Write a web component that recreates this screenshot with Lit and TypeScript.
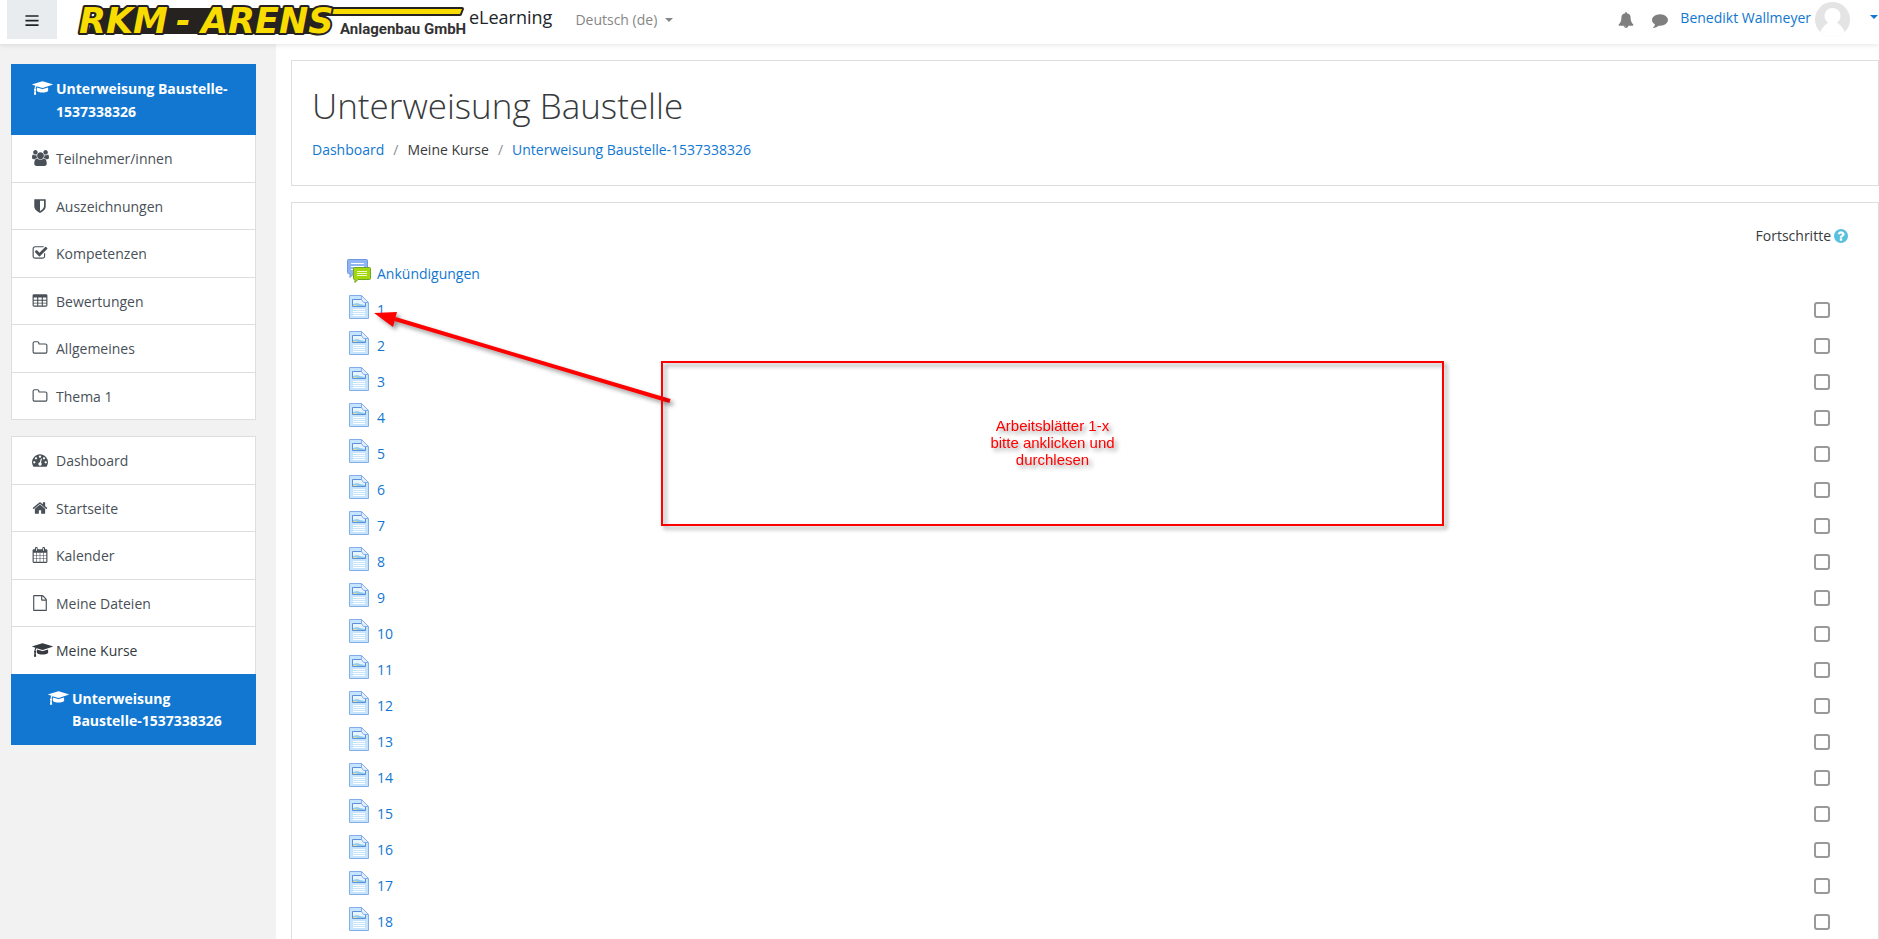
import { LitElement, html, css, svg } from "lit";
import { customElement, property } from "lit/decorators.js";

type Glyph = { box: string; d: string };

const GLYPHS: Record<string, Glyph> = {
  bars: { box: "0 0 1792 1792", d: "M192 352h1408q32 0 32 32v128q0 32-32 32h-1408q-32 0-32-32v-128q0-32 32-32zm0 512h1408q32 0 32 32v128q0 32-32 32h-1408q-32 0-32-32v-128q0-32 32-32zm0 512h1408q32 0 32 32v128q0 32-32 32h-1408q-32 0-32-32v-128q0-32 32-32z" },
  cap: { box: "0 -128 2304 1792", d: "M1774 708l18 316q4 69-82 128t-235 93.5-323 34.5-323-34.5-235-93.5-82-128l18-316 574 181q22 7 48 7t48-7zm530-324q0 23-22 31l-1120 352q-4 1-10 1t-10-1l-652-206q-43 34-71 111.5t-34 178.5q63 36 63 109 0 69-58 107l58 433q2 14-8 25-9 11-24 11h-192q-15 0-24-11-10-11-8-25l58-433q-58-38-58-107 0-73 65-111 11-207 98-330l-333-104q-22-8-22-31t22-31l1120-352q4-1 10-1t10 1l1120 352q22 8 22 31z" },
  users: { box: "64 0 1920 1792", d: "M657 896q-162 5-265 128h-134q-82 0-138-40.5t-56-118.5q0-353 124-353 6 0 43.5 21t97.5 42.5 119 21.5q67 0 133-23-5 37-5 66 0 139 81 256zm1071 637q0 120-73 189.5t-194 69.5h-874q-121 0-194-69.5t-73-189.5q0-53 3.5-103.5t14-109 26.5-108.5 43-97.5 62-81 85.5-53.5 111.5-20q10 0 43 21.5t73 48 107 48 135 21.5 135-21.5 107-48 73-48 43-21.5q61 0 111.5 20t85.5 53.5 62 81 43 97.5 26.5 108.5 14 109 3.5 103.5zm-1024-1277q0 106-75 181t-181 75-181-75-75-181 75-181 181-75 181 75 75 181zm704 384q0 159-112.5 271.5t-271.5 112.5-271.5-112.5-112.5-271.5 112.5-271.5 271.5-112.5 271.5 112.5 112.5 271.5zm576 225q0 78-56 118.5t-138 40.5h-134q-103-123-265-128 81-117 81-256 0-29-5-66 66 23 133 23 59 0 119-21.5t97.5-42.5 43.5-21q124 0 124 353zm-128-609q0 106-75 181t-181 75-181-75-75-181 75-181 181-75 181 75 75 181z" },
  shield: { box: "0 0 1792 1792", d: "M1344 960v-640h-448v1137q119-63 213-137 235-184 235-360zm192-768v768q0 86-33.5 170.5t-83 150-118 127.5-126.5 103-121 77.5-89.5 49.5-42.5 20q-12 6-26 6t-26-6q-16-7-42.5-20t-89.5-49.5-121-77.5-126.5-103-118-127.5-83-150-33.5-170.5v-768q0-26 19-45t45-19h1152q26 0 45 19t19 45z" },
  check: { box: "0 0 1792 1792", d: "M1472 930v318q0 119-84.5 203.5t-203.5 84.5h-832q-119 0-203.5-84.5t-84.5-203.5v-832q0-119 84.5-203.5t203.5-84.5h832q63 0 117 25 15 7 18 23 3 17-9 29l-49 49q-10 10-23 10-3 0-9-2-23-6-45-6h-832q-66 0-113 47t-47 113v832q0 66 47 113t113 47h832q66 0 113-47t47-113v-254q0-13 9-22l64-64q10-10 23-10 6 0 12 3 20 8 20 29zm231-489l-814 814q-24 24-57 24t-57-24l-430-430q-24-24-24-57t24-57l110-110q24-24 57-24t57 24l263 263 647-647q24-24 57-24t57 24l110 110q24 24 24 57t-24 57z" },
  table: { box: "0 0 1792 1792", d: "M224 128h1344q160 0 160 160v1088q0 160-160 160h-1344q-160 0-160-160v-1088q0-160 160-160zM192 512v256h384v-256zm512 0v256h384v-256zm512 0v256h384v-256zM192 864v224h384v-224zm512 0v224h384v-224zm512 0v224h384v-224zM192 1184v224h384v-224zm512 0v224h384v-224zm512 0v224h384v-224z" },
  folder: { box: "0 0 1792 1792", d: "M1600 1312v-704q0-40-28-68t-68-28h-704q-40 0-68-28t-28-68v-64q0-40-28-68t-68-28h-320q-40 0-68 28t-28 68v960q0 40 28 68t68 28h1216q40 0 68-28t28-68zm128-704v704q0 92-66 158t-158 66h-1216q-92 0-158-66t-66-158v-960q0-92 66-158t158-66h320q92 0 158 66t66 158v32h672q92 0 158 66t66 158z" },
  gauge: { box: "0 0 1792 1792", d: "M384 1152q0-53-37.5-90.5t-90.5-37.5-90.5 37.5-37.5 90.5 37.5 90.5 90.5 37.5 90.5-37.5 37.5-90.5zm192-448q0-53-37.5-90.5t-90.5-37.5-90.5 37.5-37.5 90.5 37.5 90.5 90.5 37.5 90.5-37.5 37.5-90.5zm428 481l101-382q6-26-7.5-48.5t-38.5-29.5-48 6.5-30 39.5l-101 382q-60 5-107 43.5t-63 98.5q-20 77 20 146t117 89 146-20 89-117q16-60-6-117t-72-91zm660-33q0-53-37.5-90.5t-90.5-37.5-90.5 37.5-37.5 90.5 37.5 90.5 90.5 37.5 90.5-37.5 37.5-90.5zm-640-640q0-53-37.5-90.5t-90.5-37.5-90.5 37.5-37.5 90.5 37.5 90.5 90.5 37.5 90.5-37.5 37.5-90.5zm448 192q0-53-37.5-90.5t-90.5-37.5-90.5 37.5-37.5 90.5 37.5 90.5 90.5 37.5 90.5-37.5 37.5-90.5zm320 448q0 261-141 483-19 29-54 29h-1402q-35 0-54-29-141-221-141-483 0-182 71-348t191-286 286-191 348-71 348 71 286 191 191 286 71 348z" },
  home: { box: "0 0 1792 1792", d: "M1472 992v480q0 26-19 45t-45 19h-384v-384h-256v384h-384q-26 0-45-19t-19-45v-480q0-1 .5-3t.5-3l575-474 575 474q1 2 1 6zm223-69l-62 74q-8 9-21 11h-3q-13 0-21-7l-692-577-692 577q-12 8-24 7-13-2-21-11l-62-74q-8-10-7-23.5t11-21.5l719-599q32-26 76-26t76 26l244 204v-195q0-14 9-23t23-9h192q14 0 23 9t9 23v408l219 182q10 8 11 21.5t-7 23.5z" },
  calendar: { box: "0 0 1792 1792", d: "M192 256h128v-96q0-160 144-160h32q144 0 144 160v96h512v-96q0-160 144-160h32q144 0 144 160v96h128q128 0 128 128v1280q0 128-128 128h-1408q-128 0-128-128v-1280q0-128 128-128zM448 128v288h96v-288zm800 0v288h96v-288zM192 640v288h288v-288zm352 0v288h320v-288zm384 0v288h320v-288zm384 0v288h288v-288zM192 992v288h288v-288zm352 0v288h320v-288zm384 0v288h320v-288zm384 0v288h288v-288zM192 1344v320h288v-320zm352 0v320h320v-320zm384 0v320h320v-320zm384 0v320h288v-320z" },
  file: { box: "0 0 1792 1792", d: "M1596 380q28 28 48 76t20 88v1152q0 40-28 68t-68 28h-1344q-40 0-68-28t-28-68v-1600q0-40 28-68t68-28h896q40 0 88 20t76 48zm-444-244v376h376q-10-29-22-41l-313-313q-12-12-41-22zm384 1528v-1024h-416q-40 0-68-28t-28-68v-416h-768v1536h1280z" },
  bell: { box: "0 0 1792 1792", d: "M912 1696q0-16-16-16-59 0-101.5-42.5t-42.5-101.5q0-16-16-16t-16 16q0 73 51.5 124.5t124.5 51.5q16 0 16-16zm816-288q0 52-38 90t-90 38h-448q0 106-75 181t-181 75-181-75-75-181h-448q-52 0-90-38t-38-90q50-42 91-88t85-119.5 74.5-158.5 50-206 19.5-260q0-152 117-282.5t307-158.5q-8-19-8-39 0-40 28-68t68-28 68 28 28 68q0 20-8 39 190 28 307 158.5t117 282.5q0 139 19.5 260t50 206 74.5 158.5 85 119.5 91 88z" },
  comment: { box: "0 0 1792 1792", d: "M1792 896q0 174-120 321.5t-326 233-450 85.5q-70 0-145-8-198 175-460 242-49 14-114 22-17 2-30.5-9t-17.5-29v-1q-3-4-.5-12t2-10 4.5-9.5l6-9 7-8.5 8-9q7-8 31-34.5t34.5-38 31-39.5 32.5-51 27-59 26-76q-157-89-247.5-220t-90.5-281q0-130 71-248.5t191-204.5 286-136.5 348-50.5q244 0 450 85.5t326 233 120 321.5z" },
  help: { box: "128 128 1536 1536", d: "M1024 1376v-192q0-14-9-23t-23-9h-192q-14 0-23 9t-9 23v192q0 14 9 23t23 9h192q14 0 23-9t9-23zm256-672q0-88-55.5-163t-138.5-116-170-41q-243 0-371 213-15 24 8 42l132 100q7 6 19 6 16 0 25-12 53-68 86-92 34-24 86-24 48 0 85.5 26t37.5 59q0 38-20 61t-68 45q-63 28-115.5 86.5t-52.5 125.5v36q0 14 9 23t23 9h192q14 0 23-9t9-23q0-19 21.5-49.5t54.5-49.5q32-18 49-28.5t46-35 44.5-48 28-60.5 12.5-81zm384 192q0 209-103 385.5t-279.5 279.5-385.5 103-385.5-103-279.5-279.5-103-385.5 103-385.5 279.5-279.5 385.5-103 385.5 103 279.5 279.5 103 385.5z" },
};

@customElement("ui-icon")
class UiIcon extends LitElement {
  @property() name = "bars";

  static styles = css`
    :host { display: inline-flex; flex: none; height: 16px; }
    .glyph { display: block; height: 100%; width: auto; fill: currentColor; fill-rule: evenodd; }
  `;

  render() {
    const g = GLYPHS[this.name];
    const [, , w, h] = g.box.split(" ").map(Number);
    return html`<svg class="glyph" viewBox=${g.box} width=${Math.round((16 * w) / h)} height="16" aria-hidden="true">${svg`<path d=${g.d}></path>`}</svg>`;
  }
}

interface NavItem {
  icon: string;
  label: string;
  kind?: "active" | "nested" | "dark";
}

@customElement("nav-drawer")
class NavDrawer extends LitElement {
  static styles = css`
    :host { display: flex; flex-direction: column; gap: 16px; box-sizing: border-box; padding: 20px 20px 20px 11px; background: #f2f2f2; }
    .list { margin: 0; padding: 0 0 1px; list-style: none; }
    .item { display: flex; margin-bottom: -1px; padding: 13px 20px 11px; border: 1px solid #dedede; background: #fff; color: #495057; text-decoration: none; }
    .icon { width: 24px; flex: none; padding-top: 2px; }
    .text { font-size: 14px; }
    .dark { color: #343a40; }
    .active { position: relative; background: #1177d1; border-color: #1177d1; color: #fff; font-weight: 700; }
    .nested { padding-left: 36px; }
  `;

  private course: NavItem[] = [
    { icon: "cap", label: "Unterweisung Baustelle-1537338326", kind: "active" },
    { icon: "users", label: "Teilnehmer/innen" },
    { icon: "shield", label: "Auszeichnungen" },
    { icon: "check", label: "Kompetenzen" },
    { icon: "table", label: "Bewertungen" },
    { icon: "folder", label: "Allgemeines" },
    { icon: "folder", label: "Thema 1" },
  ];

  private site: NavItem[] = [
    { icon: "gauge", label: "Dashboard" },
    { icon: "home", label: "Startseite" },
    { icon: "calendar", label: "Kalender" },
    { icon: "file", label: "Meine Dateien" },
    { icon: "cap", label: "Meine Kurse", kind: "dark" },
    { icon: "cap", label: "Unterweisung Baustelle-1537338326", kind: "nested" },
  ];

  private list(items: NavItem[]) {
    return html`<ul class="list">
      ${items.map((i) => {
        const cls = i.kind === "nested" ? "active nested" : i.kind ?? "";
        return html`<li><a class="item ${cls}" href="#"><ui-icon class="icon" name=${i.icon}></ui-icon><span class="text">${i.label}</span></a></li>`;
      })}
    </ul>`;
  }

  render() {
    return html`${this.list(this.course)}${this.list(this.site)}`;
  }
}

@customElement("brand-logo")
class BrandLogo extends LitElement {
  static styles = css`
    :host { display: block; flex: none; }
    .logo { display: block; overflow: visible; }
    .word { font: italic 700 35px "DejaVu Sans", sans-serif; fill: #f8dc00; stroke: #26221f; stroke-width: 4px; stroke-linejoin: round; paint-order: stroke; }
    .firm { font: 700 15px Roboto, "Liberation Sans", sans-serif; fill: #333; }
  `;

  render() {
    return html`<svg class="logo" width="388" height="40" viewBox="0 0 388 40" role="img" aria-label="RKM-ARENS Anlagenbau GmbH">
      <path d="M20 8h228l-6 26H10z" fill="#26221f"></path>
      <path d="M244 8h141q1 0 1 1l-2 5q0 1-1 1H244z" fill="#f8dc00" stroke="#26221f" stroke-width="2" stroke-linejoin="round"></path>
      <text class="word" y="33"><tspan x="2">RKM</tspan><tspan x="99">-</tspan><tspan x="124">ARENS</tspan></text>
      <text class="firm" x="263" y="34">Anlagenbau GmbH</text>
    </svg>`;
  }
}

@customElement("app-root")
class AppRoot extends LitElement {
  static styles = css`
    :host { display: block; position: relative; height: 100vh; overflow: hidden; background: #fff; color: #373a3c; font-family: "Open Sans", "Segoe UI", sans-serif; font-size: 15px; line-height: 1.5em; }
    a { color: #1177d1; text-decoration: none; }
    .bar { position: relative; display: flex; align-items: flex-start; box-sizing: border-box; height: 44px; padding-left: 7px; background: #fff; box-shadow: 0 2px 4px rgba(0, 0, 0, 0.08); }
    .burger { display: flex; align-items: center; justify-content: center; width: 50px; height: 39px; margin-right: 20px; padding: 0; border: 0; background: #e9ecef; color: #212529; }
    .site { display: flex; color: #212529; font-size: 18px; line-height: 34px; }
    .site span { padding-left: 4px; }
    .lang { display: flex; align-items: center; gap: 8px; height: 40px; margin-left: 23px; padding: 0; border: 0; background: none; color: #868686; font: inherit; font-size: 14px; }
    .caret { border: 4px solid transparent; border-top-color: currentColor; border-bottom: 0; }
    .tools { display: flex; align-items: center; height: 38px; margin-left: auto; color: #7f7f7f; }
    .tool { display: flex; margin-right: 18px; padding: 2px 0 0; border: 0; background: none; color: inherit; }
    .user { display: flex; align-items: center; gap: 4px; font-size: 14px; }
    .name { padding-bottom: 2px; margin-left: -6px; }
    .user .caret { margin: 0 1px 4px 16px; }
    .body { display: grid; grid-template-columns: 276px minmax(0, 1fr); min-height: calc(100vh - 44px); }
    .main { display: flex; flex-direction: column; gap: 16px; padding: 16px 0 16px 15px; }
    .card { border: 1px solid #dedede; background: #fff; }
    .head { padding: 24px 20px; }
    h1 { margin: 0 0 12px; font-size: 35px; font-weight: 300; line-height: 42px; }
    .crumbs { display: flex; gap: 9px; font-size: 14px; line-height: 22px; }
    .sep { color: #868e96; }
    .course { padding: 21px 20px; }
    .progress { display: flex; align-items: center; justify-content: flex-end; gap: 3px; margin-bottom: 8px; padding-right: 10px; font-size: 14px; line-height: 24px; }
    .help { height: 14px; color: #5bc0de; }
    .acts { margin: 0; padding: 0 28px 0 35px; list-style: none; }
    .act { display: flex; align-items: center; justify-content: space-between; height: 36px; }
    .link { display: flex; align-items: center; gap: 6px; font-size: 14px; }
    .pic { display: block; margin-bottom: 6px; }
    .tick { appearance: none; box-sizing: border-box; width: 16px; height: 16px; margin: 0; border: 2px solid #999; border-radius: 3px; background: #fff; }
    .arrow { position: absolute; left: 370px; top: 306px; overflow: visible; filter: drop-shadow(3px 3px 2px rgba(0, 0, 0, 0.4)); pointer-events: none; }
    .note { position: absolute; left: 661px; top: 361px; box-sizing: border-box; width: 783px; height: 165px; padding-bottom: 3px; display: flex; align-items: center; justify-content: center; border: 2px solid #f00; color: #f00; font: 15px/17px "Liberation Sans", Arial, sans-serif; text-align: center; filter: drop-shadow(3px 3px 2px rgba(0, 0, 0, 0.4)); }
  `;

  private forumPic = html`<svg class="pic" width="24" height="24" viewBox="0 0 24 24" aria-hidden="true">
    <path d="M1.500.5h18q1 0 1 1v12q0 1-1 1H7l-4 4v-4H1.500q-1 0-1-1v-12q0-1 1-1z" fill="#8fb5f2" stroke="#6f98de"></path>
    <path d="M4 4.500h13M4 7.500h13M4 10.500h3" stroke="#fff" fill="none"></path>
    <path d="M7.500 8.500h15q1 0 1 1v10q0 1-1 1H11l-3 3v-3h-.5q-1 0-1-1v-10q0-1 1-1z" fill="#a2d80c" stroke="#6fa52a"></path>
    <path d="M10 12.500h10M10 14.500h10M10 16.500h10" stroke="#f2fbd0" fill="none"></path>
  </svg>`;

  private pagePic = html`<svg class="pic" width="24" height="24" viewBox="0 0 24 24" aria-hidden="true">
    <path d="M2.500.5h12l7 7v16h-19z" fill="#c6e4fb" stroke="#82aeee"></path>
    <path d="M5.500 4.500h13v7h-13z" fill="#e9f5fd" stroke="#5d8fdc"></path>
    <path d="M6 9l4-1 3 1 5 1v1H6z" fill="#8fcbee"></path>
    <path d="M6 10h4v1H6z" fill="#f0d890"></path>
    <path d="M14.500.5v4l2 3h5z" fill="#e2f0fd" stroke="#82aeee"></path>
    <path d="M6 14.500h12M6 16.500h12M6 18.500h12M6 20.500h12" stroke="#fff" fill="none"></path>
  </svg>`;

  private pages = Array.from({ length: 18 }, (_, i) => String(i + 1));

  render() {
    return html`
      <header class="bar">
        <button class="burger" aria-label="Navigation"><ui-icon name="bars"></ui-icon></button>
        <a class="site" href="#"><brand-logo></brand-logo><span>eLearning</span></a>
        <button class="lang">Deutsch (de)<i class="caret"></i></button>
        <div class="tools">
          <button class="tool" aria-label="Benachrichtigungen"><ui-icon name="bell"></ui-icon></button>
          <button class="tool" aria-label="Mitteilungen"><ui-icon name="comment"></ui-icon></button>
          <a class="user" href="#"><span class="name">Benedikt Wallmeyer</span>
            <svg width="35" height="35" viewBox="0 0 35 35" aria-hidden="true">
              <clipPath id="round"><circle cx="17.500" cy="17.500" r="17.500"></circle></clipPath>
              <g clip-path="url(#round)">
                <path d="M0 0h35v35H0z" fill="#e4e4e4"></path>
                <circle cx="17.500" cy="14" r="8" fill="#fff"></circle>
                <path d="M4 35q2-10 8.500-14h10q6.500 4 8.500 14z" fill="#fff"></path>
              </g>
            </svg>
            <i class="caret"></i></a>
        </div>
      </header>
      <div class="body">
        <nav-drawer></nav-drawer>
        <main class="main">
          <section class="card head">
            <h1>Unterweisung Baustelle</h1>
            <nav class="crumbs"><a href="#">Dashboard</a><span class="sep">/</span><span>Meine Kurse</span><span class="sep">/</span><a href="#">Unterweisung Baustelle-1537338326</a></nav>
          </section>
          <section class="card course">
            <div class="progress">Fortschritte<ui-icon class="help" name="help"></ui-icon></div>
            <ul class="acts">
              <li class="act"><a class="link" href="#">${this.forumPic}Ankündigungen</a></li>
              ${this.pages.map((p) => html`<li class="act"><a class="link" href="#">${this.pagePic}${p}</a><input class="tick" type="checkbox" aria-label=${p} /></li>`)}
            </ul>
          </section>
        </main>
      </div>
      <svg class="arrow" width="300" height="100" viewBox="0 0 300 100" aria-hidden="true">
        <path d="M25 13L300 95" stroke="#f00" stroke-width="4"></path>
        <path d="M4 7l23-1-4 15z" fill="#f00"></path>
      </svg>
      <div class="note">Arbeitsblätter 1-x<br />bitte anklicken und<br />durchlesen</div>
    `;
  }
}
